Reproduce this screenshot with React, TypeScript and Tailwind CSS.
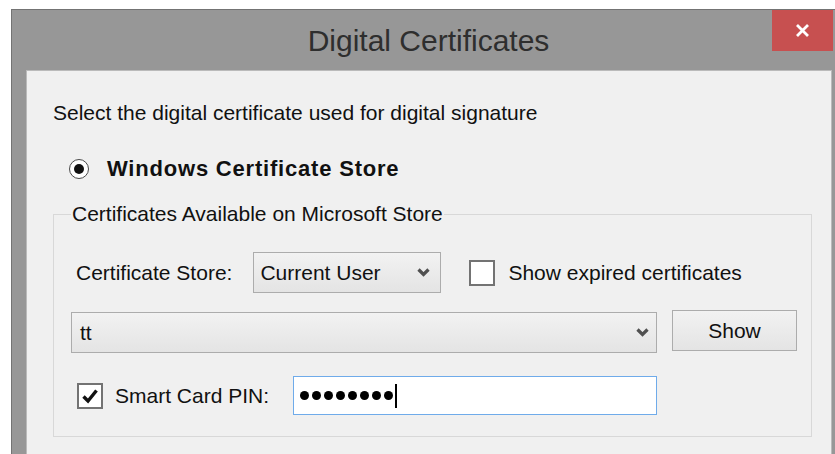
import { useState } from 'react'

const font = { fontFamily: '"Liberation Sans", Arial, sans-serif' }

function Chevron() {
  return (
    <svg width="13" height="9" viewBox="0 0 13 9" fill="none">
      <path d="M1.5 1.5 L6.5 6.5 L11.5 1.5" stroke="#505050" strokeWidth="3.2" />
    </svg>
  )
}

function CheckBox({ checked }: { checked: boolean }) {
  return (
    <div className="w-[26px] h-[26px] shrink-0 border-2 border-[#737373] bg-white flex items-center justify-center">
      {checked && (
        <svg width="18" height="16" viewBox="0 0 18 16" fill="none">
          <path d="M2.5 8.5 L7 13 L15.5 2.5" stroke="#111" strokeWidth="3.4" />
        </svg>
      )}
    </div>
  )
}

export default function App() {
  const [showExpired, setShowExpired] = useState(false)
  const [useSmartCard, setUseSmartCard] = useState(true)

  return (
    <div className="w-[835px] h-[454px] overflow-hidden bg-white pt-[9px] pl-[11px]" style={font}>
      {/* Window frame */}
      <div className="w-[827px] h-[460px] border-l border-t border-[#737373] bg-[#979797]">
        {/* Title bar */}
        <div className="h-[60px] flex pr-[5px]">
          <div className="flex-1 flex items-center justify-center pl-[73px] pt-[1px] text-[30px] leading-[36px] text-[#2e2e2e]">
            Digital Certificates
          </div>
          <button className="w-[61px] h-[41px] bg-[#c75050] flex items-center justify-center">
            <svg width="15" height="15" viewBox="0 0 15 15" fill="none">
              <path d="M2 2 L13 13 M13 2 L2 13" stroke="#fff" strokeWidth="2.8" />
            </svg>
          </button>
        </div>

        {/* Client area */}
        <div className="ml-[14px] w-[806px] h-[420px] border border-[#bababa] bg-[#f0f0f0] pl-[26px] pt-[30px] text-[#111]">
          <p className="text-[21px] leading-[24px]">Select the digital certificate used for digital signature</p>

          <div className="mt-[31px] flex items-center ml-[16px]">
            <div className="w-[20px] h-[20px] rounded-full border-[1.5px] border-[#4a4a4a] bg-white flex items-center justify-center">
              <div className="w-[10px] h-[10px] rounded-full bg-[#111]" />
            </div>
            <span className="ml-[18px] text-[22px] leading-[26px] font-bold tracking-[0.8px]">
              Windows Certificate Store
            </span>
          </div>

          <fieldset className="mt-[20px] w-[759px] border border-[#d8d8d8] pl-[17px] pt-[26px] pb-[21px]">
            <legend className="px-[1px] text-[21px] leading-[24px]">Certificates Available on Microsoft Store</legend>

            {/* Store selection */}
            <div className="flex items-center text-[21px] leading-[24px]">
              <span className="ml-[5px]">Certificate Store:</span>
              <div className="ml-[21px] w-[188px] h-[41px] border border-[#acacac] bg-gradient-to-b from-[#f2f2f2] to-[#e4e4e4] flex items-center justify-between pl-[6px] pr-[10px]">
                <span>Current User</span>
                <Chevron />
              </div>
              <label className="ml-[28px] flex items-center" onClick={() => setShowExpired(!showExpired)}>
                <CheckBox checked={showExpired} />
                <span className="ml-[13px]">Show expired certificates</span>
              </label>
            </div>

            {/* Certificate list */}
            <div className="mt-[17px] flex items-start text-[21px] leading-[24px]">
              <div className="mt-[2px] w-[586px] h-[41px] border border-[#acacac] bg-gradient-to-b from-[#f2f2f2] to-[#e4e4e4] flex items-center justify-between pl-[8px] pr-[7px]">
                <span>tt</span>
                <Chevron />
              </div>
              <button className="ml-[15px] w-[125px] h-[41px] border border-[#acacac] bg-gradient-to-b from-[#f2f2f2] to-[#e4e4e4]">
                Show
              </button>
            </div>

            {/* Smart card PIN */}
            <div className="mt-[23px] flex items-center text-[21px] leading-[24px]">
              <label className="ml-[6px] flex items-center" onClick={() => setUseSmartCard(!useSmartCard)}>
                <CheckBox checked={useSmartCard} />
                <span className="ml-[12px]">Smart Card PIN:</span>
              </label>
              <div className="ml-[24px] w-[364px] h-[39px] border border-[#6fabea] bg-white flex items-center pl-[6px]">
                <div className="flex gap-[3px]">
                  {Array.from({ length: 8 }).map((_, i) => (
                    <span key={i} className="w-[9px] h-[9px] rounded-full bg-black" />
                  ))}
                </div>
                <span className="ml-[2px] w-[2px] h-[24px] bg-black" />
              </div>
            </div>
          </fieldset>
        </div>
      </div>
    </div>
  )
}
